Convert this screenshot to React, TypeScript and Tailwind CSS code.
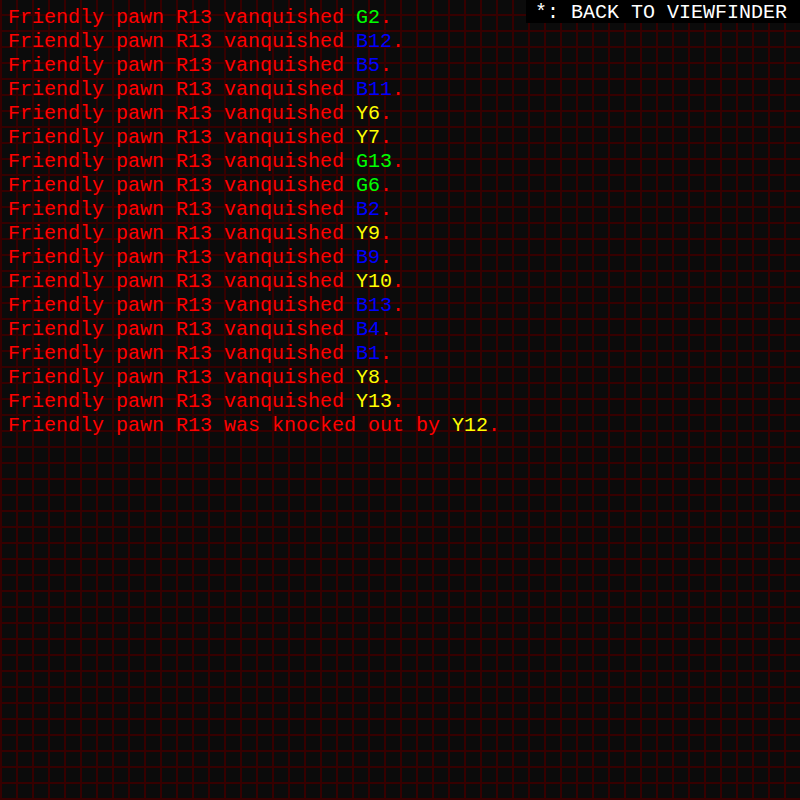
import React from "react";

type Entry = { prefix: string; name: string; color: string };

const GREEN = "text-[#00ff00]";
const BLUE = "text-[#0000ff]";
const YELLOW = "text-[#ffff00]";

const V = "Friendly pawn R13 vanquished ";

const entries: Entry[] = [
  { prefix: V, name: "G2", color: GREEN },
  { prefix: V, name: "B12", color: BLUE },
  { prefix: V, name: "B5", color: BLUE },
  { prefix: V, name: "B11", color: BLUE },
  { prefix: V, name: "Y6", color: YELLOW },
  { prefix: V, name: "Y7", color: YELLOW },
  { prefix: V, name: "G13", color: GREEN },
  { prefix: V, name: "G6", color: GREEN },
  { prefix: V, name: "B2", color: BLUE },
  { prefix: V, name: "Y9", color: YELLOW },
  { prefix: V, name: "B9", color: BLUE },
  { prefix: V, name: "Y10", color: YELLOW },
  { prefix: V, name: "B13", color: BLUE },
  { prefix: V, name: "B4", color: BLUE },
  { prefix: V, name: "B1", color: BLUE },
  { prefix: V, name: "Y8", color: YELLOW },
  { prefix: V, name: "Y13", color: YELLOW },
  { prefix: "Friendly pawn R13 was knocked out by ", name: "Y12", color: YELLOW },
];

export default function App() {
  return (
    <div
      className="relative w-[800px] h-[800px] overflow-hidden bg-[#0b0b0b] bg-[linear-gradient(to_right,#360000_0px,#360000_2px,transparent_2px),linear-gradient(to_bottom,transparent_14px,#360000_14px,#360000_16px)] bg-[length:16px_16px]"
      style={{ fontFamily: '"Liberation Mono", "DejaVu Sans Mono", monospace' }}
    >
      <div className="flex flex-col pl-[8px] pt-[6px] text-[20px] leading-[24px] text-[#ff0000] whitespace-pre">
        {entries.map((e, i) => (
          <div key={i}>
            {e.prefix}
            <span className={e.color}>{e.name}</span>.
          </div>
        ))}
      </div>
      <div className="absolute top-0 right-0 h-[23px] bg-black pt-[2px] pl-[9px] pr-[13px] text-[20px] leading-[21px] text-white whitespace-pre">
        *: BACK TO VIEWFINDER
      </div>
    </div>
  );
}
